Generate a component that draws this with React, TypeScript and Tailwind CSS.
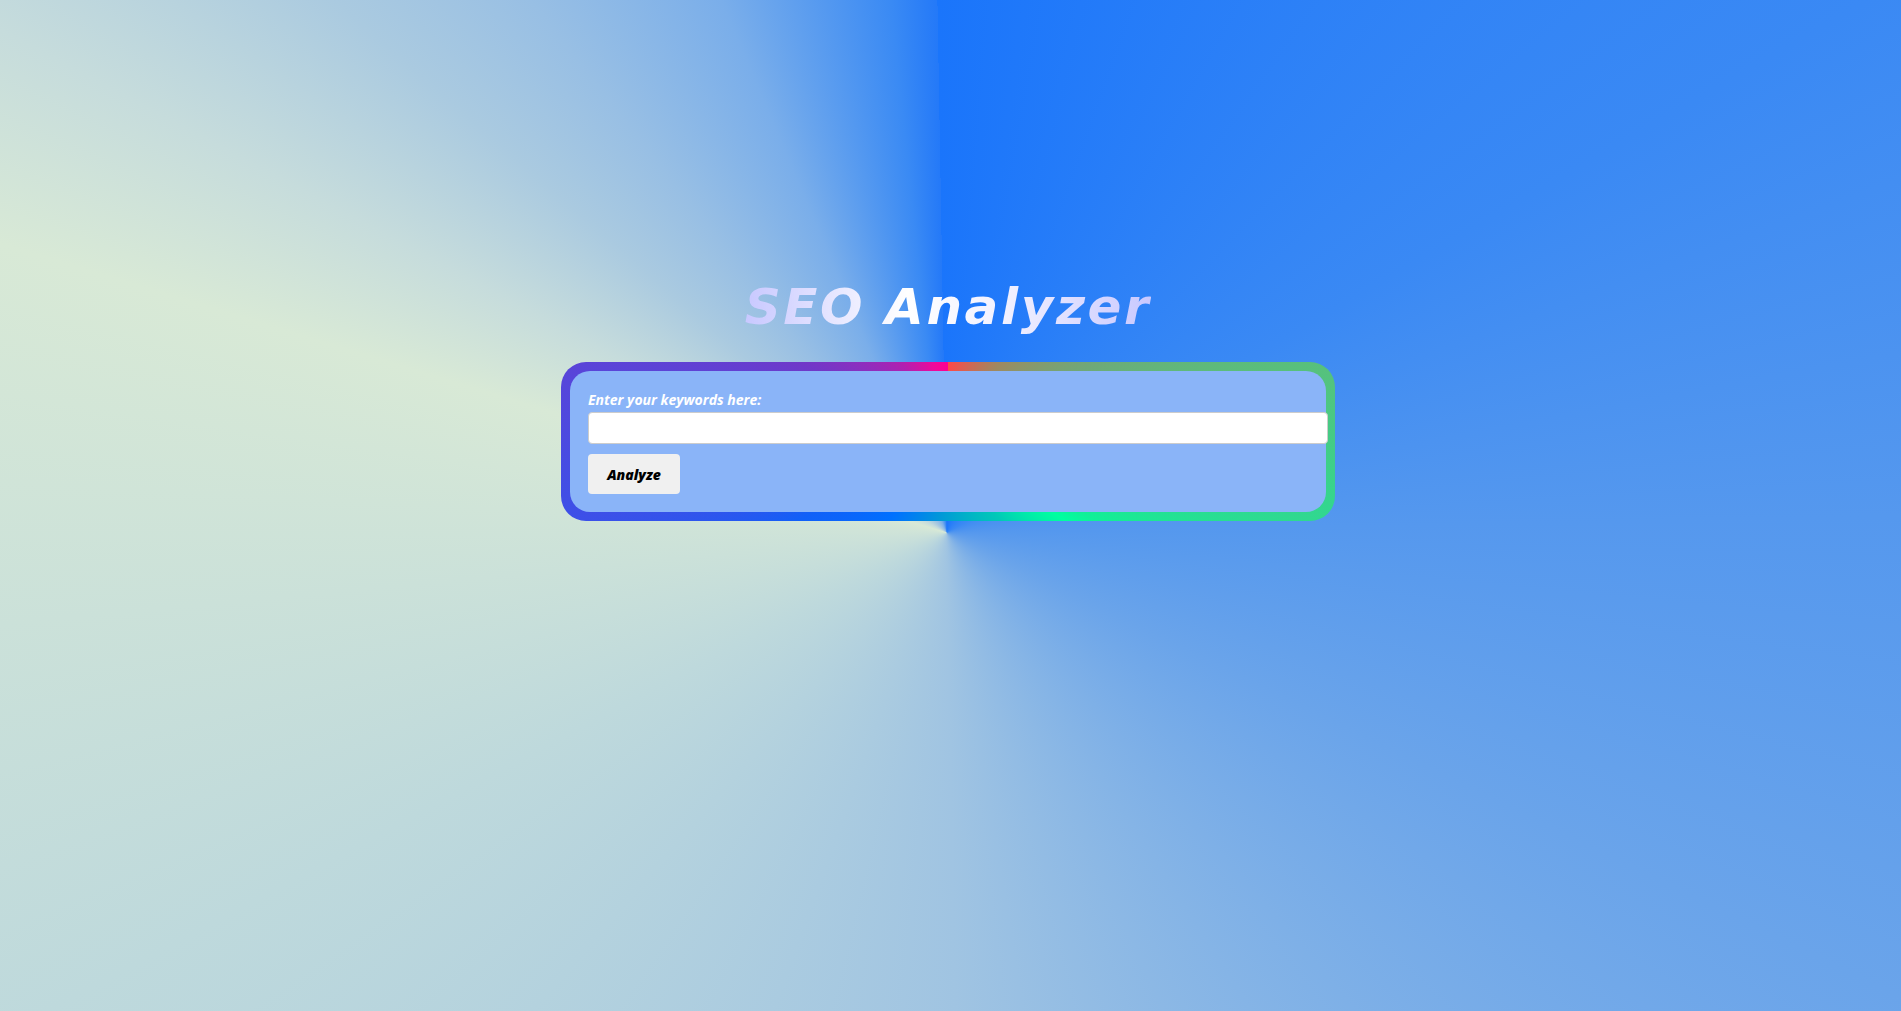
import React from "react";

const App = () => {
  const onSubmitHandle = (e: any) => {
    e.preventDefault();
  };

  return (
    <div className="min-h-screen w-full bg-[conic-gradient(from_-1deg_at_49.8%_52.7%,#1a75fb_0deg,#3a89f4_61deg,#5598ee_90deg,#6aa4ea_117deg,#a0c4e2_180deg,#bed9dc_243deg,#d8e9d6_288deg,#c6dcdc_299deg,#aacae0_312deg,#98bfe4_323deg,#7aaeea_338deg,#3a8af4_355deg,#2479f8_360deg)] pr-[5px] pt-[277px] font-['Open_Sans','Lato',sans-serif]">
      <h1 className="mx-auto w-fit bg-[linear-gradient(90deg,#c8c8ff_0%,#ffffff_40%,#f0f0ff_65%,#c8c8ff_100%)] bg-clip-text text-center font-['DejaVu_Sans',sans-serif] text-[50px] font-bold italic leading-[60px] tracking-[2.6px] text-transparent">
        SEO Analyzer
      </h1>

      <div className="mx-auto mt-[25px] w-[774px] rounded-[25px] bg-[conic-gradient(#ff4848_0deg,#a08860_33deg,#70a878_62deg,#58c07c_78deg,#30d890_102deg,#10f098_118deg,#00ffa0_124deg,#00c8b8_147deg,#0098d8_186deg,#0070ff_217deg,#1060f8_242deg,#3c50e8_258deg,#5a44d8_282deg,#7038c8_298deg,#8830c0_309deg,#b020b0_329deg,#f0089a_350deg,#ff0090_360deg)] p-[9px]">
        <form
          onSubmit={onSubmitHandle}
          className="flex flex-col items-start rounded-[20px] bg-[#8ab4f8] px-[18px] pb-[18px] pt-[19px]"
        >
          <label className="mb-[2px] text-[14px] font-bold italic leading-[20px] text-white">
            Enter your keywords here:
          </label>
          <input
            type="text"
            className="box-content h-[30px] w-full rounded-[4px] border border-[#cccccc] bg-white px-[9px] text-[14px] outline-none"
          />
          <button
            type="submit"
            className="mt-[10px] h-[40px] w-[92px] rounded-[4px] bg-[#f0f0f0] text-[14px] font-extrabold italic text-black"
          >
            Analyze
          </button>
        </form>
      </div>
    </div>
  );
};

export default App;
